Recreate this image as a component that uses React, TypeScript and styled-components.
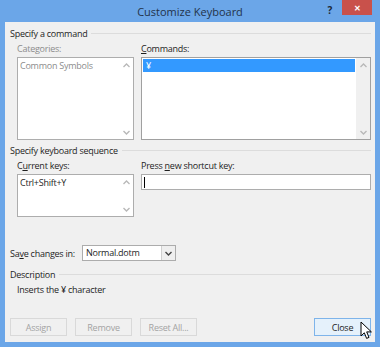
import styled, { createGlobalStyle } from 'styled-components'

const GlobalStyle = createGlobalStyle`
  html, body {
    margin: 0;
    padding: 0;
    background: #6ba6e8;
  }
  body {
    font-family: "Open Sans", "Noto Sans", sans-serif;
    font-size: 9px;
    letter-spacing: -0.25px;
    color: #1e1e1e;
  }
`

const ChevronUp = () => (
  <svg width="7" height="5" viewBox="0 0 7 5">
    <path d="M0.5 4 L3.5 1 L6.5 4" fill="none" stroke="#b8b8b8" strokeWidth="1.3" />
  </svg>
)

const ChevronDown = ({ color = '#b8b8b8' }: { color?: string }) => (
  <svg width="7" height="5" viewBox="0 0 7 5">
    <path d="M0.5 1 L3.5 4 L6.5 1" fill="none" stroke={color} strokeWidth="1.4" />
  </svg>
)

const Cursor = () => (
  <svg width="13" height="19" viewBox="0 0 13 19">
    <path
      d="M1 1 L1 15 L4.3 11.8 L6.6 17.4 L9 16.4 L6.7 10.9 L11.4 10.9 Z"
      fill="#fff"
      stroke="#000"
      strokeWidth="1"
      strokeLinejoin="round"
    />
  </svg>
)

const ScrollBar = ({ track }: { track: string }) => (
  <Scroll $track={track}>
    <ChevronUp />
    <ChevronDown />
  </Scroll>
)

export default function App() {
  return (
    <Window>
      <GlobalStyle />
      <TitleBar>
        <Title>Customize Keyboard</Title>
        <Help>?</Help>
        <CloseX>✕</CloseX>
      </TitleBar>
      <Client>
        <SectionHeader>
          <span>Specify a command</span>
          <Rule />
        </SectionHeader>
        <Columns>
          <Column $width={117}>
            <Label $disabled>Categories:</Label>
            <ListBox $height={83}>
              <ListItems>
                <DisabledItem>Common Symbols</DisabledItem>
              </ListItems>
              <ScrollBar track="#fff" />
            </ListBox>
          </Column>
          <Column $width={230}>
            <Label>
              <u>C</u>ommands:
            </Label>
            <ListBox $height={83} $dark>
              <ListItems>
                <Selected>¥</Selected>
              </ListItems>
              <ScrollBar track="#f0f0f0" />
            </ListBox>
          </Column>
        </Columns>

        <SectionHeader $top={3}>
          <span>Specify keyboard sequence</span>
          <Rule />
        </SectionHeader>
        <Columns>
          <Column $width={117}>
            <Label>
              C<u>u</u>rrent keys:
            </Label>
            <ListBox $height={43}>
              <ListItems>
                <Item>Ctrl+Shift+Y</Item>
              </ListItems>
              <ScrollBar track="#fff" />
            </ListBox>
          </Column>
          <Column $width={230}>
            <Label>
              Press <u>n</u>ew shortcut key:
            </Label>
            <TextInput>
              <Caret />
            </TextInput>
          </Column>
        </Columns>

        <SaveRow>
          <SaveLabel>
            Sa<u>v</u>e changes in:
          </SaveLabel>
          <Select>
            <SelectValue>Normal.dotm</SelectValue>
            <SelectButton>
              <ChevronDown color="#444" />
            </SelectButton>
          </Select>
        </SaveRow>

        <SectionHeader $top={6}>
          <span>Description</span>
          <Rule />
        </SectionHeader>
        <Description>Inserts the ¥ character</Description>

        <ButtonRow>
          <Button disabled>Assign</Button>
          <Button disabled>Remove</Button>
          <Button disabled>Reset All...</Button>
          <Spacer />
          <Button $hover>
            Close
            <CursorSpot>
              <Cursor />
            </CursorSpot>
          </Button>
        </ButtonRow>
      </Client>
    </Window>
  )
}

const Window = styled.div`
  width: 380px;
  height: 347px;
  box-sizing: border-box;
  background: #6ba6e8;
  padding: 0 5px 5px 5px;
  display: flex;
  flex-direction: column;
`

const TitleBar = styled.div`
  height: 22px;
  position: relative;
  display: flex;
  align-items: center;
  justify-content: center;
`

const Title = styled.div`
  font-family: "Open Sans", sans-serif;
  font-size: 11px;
  letter-spacing: 0;
  color: #23334a;
`

const Help = styled.div`
  position: absolute;
  right: 43px;
  top: 3px;
  font-weight: 700;
  font-size: 10px;
  color: #1e2a38;
`

const CloseX = styled.div`
  position: absolute;
  right: 3px;
  top: 0;
  width: 30px;
  height: 15px;
  background: #c9514b;
  color: #fff;
  font-size: 8px;
  font-weight: 700;
  display: flex;
  align-items: center;
  justify-content: center;
`

const Client = styled.div`
  flex: 1;
  background: #f0f0f0;
  padding: 4px 4px 0 5px;
  display: flex;
  flex-direction: column;
  position: relative;
`

const SectionHeader = styled.div<{ $top?: number }>`
  display: flex;
  align-items: center;
  gap: 4px;
  height: 15px;
  margin-top: ${({ $top }) => $top ?? 0}px;
  color: #1e1e1e;
`

const Rule = styled.div`
  flex: 1;
  height: 1px;
  background: #dcdcdc;
`

const Columns = styled.div`
  display: flex;
  gap: 7px;
  padding-left: 7px;
`

const Column = styled.div<{ $width: number }>`
  width: ${({ $width }) => $width}px;
  display: flex;
  flex-direction: column;
`

const Label = styled.div<{ $disabled?: boolean }>`
  height: 15px;
  line-height: 15px;
  margin-bottom: 1px;
  color: ${({ $disabled }) => ($disabled ? '#8c8c8c' : '#1e1e1e')};
`

const ListBox = styled.div<{ $height: number; $dark?: boolean }>`
  height: ${({ $height }) => $height}px;
  box-sizing: border-box;
  border: 1px solid ${({ $dark }) => ($dark ? '#a0a0a0' : '#adadad')};
  background: #fff;
  display: flex;
`

const ListItems = styled.div`
  flex: 1;
  padding: 1px;
`

const Item = styled.div`
  height: 13px;
  line-height: 13px;
  padding-left: 1px;
  color: #1e1e1e;
`

const DisabledItem = styled(Item)`
  color: #8c8c8c;
`

const Selected = styled(Item)`
  background: #3399ff;
  color: #fff;
  padding-left: 3px;
`

const Scroll = styled.div<{ $track: string }>`
  width: 14px;
  background: ${({ $track }) => $track};
  display: flex;
  flex-direction: column;
  justify-content: space-between;
  align-items: center;
  padding: 5px 0 4px;
`

const TextInput = styled.div`
  height: 16px;
  box-sizing: border-box;
  border: 1px solid #adadad;
  background: #fff;
  display: flex;
  align-items: center;
  padding-left: 2px;
`

const Caret = styled.div`
  width: 1px;
  height: 11px;
  background: #000;
`

const SaveRow = styled.div`
  display: flex;
  align-items: center;
  margin-top: 28px;
  height: 16px;
`

const SaveLabel = styled.span`
  width: 72px;
`

const Select = styled.div`
  width: 94px;
  height: 16px;
  box-sizing: border-box;
  border: 1px solid #acacac;
  background: #fff;
  display: flex;
`

const SelectValue = styled.div`
  flex: 1;
  padding-left: 3px;
  line-height: 14px;
`

const SelectButton = styled.div`
  width: 13px;
  border-left: 1px solid #d0d0d0;
  background: #efefef;
  display: flex;
  align-items: center;
  justify-content: center;
`

const Description = styled.div`
  padding-left: 7px;
  height: 15px;
  line-height: 15px;
`

const ButtonRow = styled.div`
  display: flex;
  gap: 8px;
  margin-top: 21px;
`

const Spacer = styled.div`
  flex: 1;
`

const Button = styled.button<{ $hover?: boolean }>`
  position: relative;
  width: 57px;
  height: 18px;
  padding: 0;
  box-sizing: border-box;
  font-family: "Open Sans", sans-serif;
  font-size: 9px;
  letter-spacing: -0.25px;
  border: 1px solid ${({ $hover }) => ($hover ? '#7eb4ea' : '#d9d9d9')};
  background: ${({ $hover }) => ($hover ? '#e5f1fb' : '#f0f0f0')};
  color: #1e1e1e;

  &:disabled {
    color: #a3a3a3;
  }
`

const CursorSpot = styled.div`
  position: absolute;
  left: 45px;
  top: 2px;
`
